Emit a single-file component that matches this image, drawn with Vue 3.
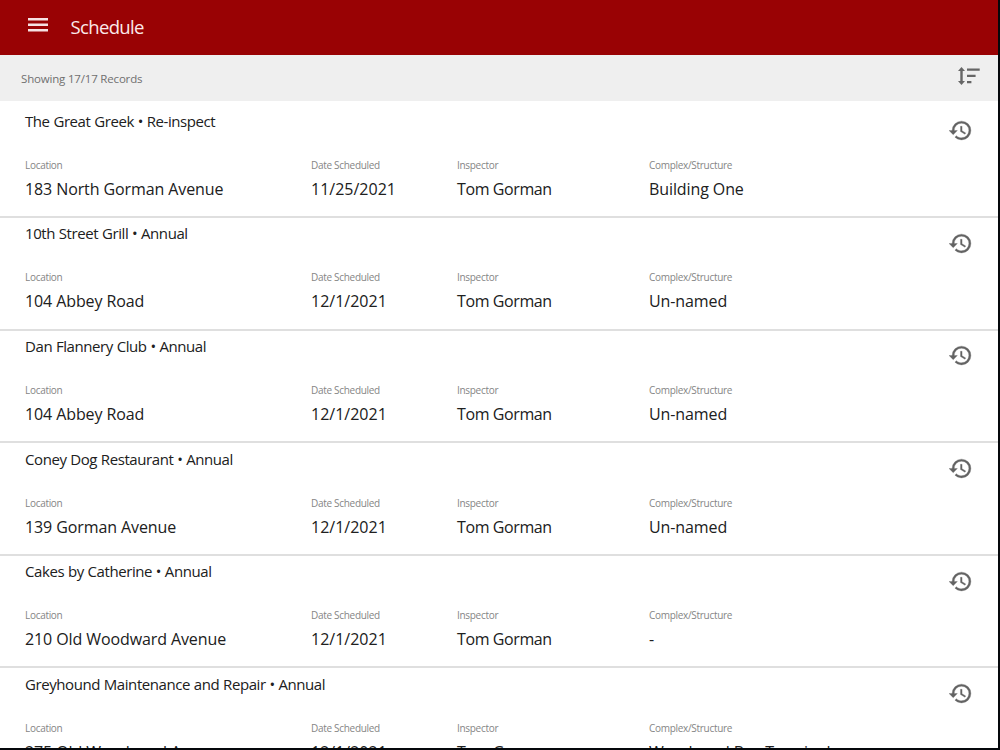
<script setup>
import { ref, computed } from 'vue';

const total = 17;
const records = ref([
  { id: 1, name: 'The Great Greek', type: 'Re-inspect', location: '183 North Gorman Avenue', date: '11/25/2021', inspector: 'Tom Gorman', structure: 'Building One' },
  { id: 2, name: '10th Street Grill', type: 'Annual', location: '104 Abbey Road', date: '12/1/2021', inspector: 'Tom Gorman', structure: 'Un-named' },
  { id: 3, name: 'Dan Flannery Club', type: 'Annual', location: '104 Abbey Road', date: '12/1/2021', inspector: 'Tom Gorman', structure: 'Un-named' },
  { id: 4, name: 'Coney Dog Restaurant', type: 'Annual', location: '139 Gorman Avenue', date: '12/1/2021', inspector: 'Tom Gorman', structure: 'Un-named' },
  { id: 5, name: 'Cakes by Catherine', type: 'Annual', location: '210 Old Woodward Avenue', date: '12/1/2021', inspector: 'Tom Gorman', structure: '-' },
  { id: 6, name: 'Greyhound Maintenance and Repair', type: 'Annual', location: '275 Old Woodward Avenue', date: '12/1/2021', inspector: 'Tom Gorman', structure: 'Woodward Bus Terminal' },
]);

const summary = computed(() => `Showing ${total}/${total} Records`);
</script>

<template>
  <div class="screen">
    <header class="app-bar">
      <svg class="menu" viewBox="0 0 20 14">
        <path d="M0 0h20v2.6H0zM0 5.5h20v2.6H0zM0 11h20v2.6H0z" />
      </svg>
      <h1>Schedule</h1>
    </header>

    <div class="toolbar">
      <span class="summary">{{ summary }}</span>
      <svg class="sort" viewBox="0 0 22 18">
        <path d="M3.5 0 7 3.9H4.7v10.2H7L3.5 18 0 14.1h2.3V3.9H0z" />
        <path d="M9 1.5h12.7v2.3H9zM9 7.7h8.6V10H9zM9 13.9h4.4v2.3H9z" />
      </svg>
    </div>

    <main class="list">
      <article v-for="record in records" :key="record.id" class="record">
        <div class="top">
          <h2>{{ record.name }} • {{ record.type }}</h2>
          <svg class="history" viewBox="0 0 24 24">
            <path d="M13 3a9 9 0 0 0-9 9H1l4 4 4-4H6a7 7 0 1 1 7 7c-1.93 0-3.68-.79-4.94-2.06l-1.42 1.42A8.95 8.95 0 0 0 13 21a9 9 0 0 0 0-18zm-1 5v5l4.28 2.54.72-1.21-3.5-2.08V8z" />
          </svg>
        </div>
        <dl class="fields">
          <div>
            <dt>Location</dt>
            <dd>{{ record.location }}</dd>
          </div>
          <div>
            <dt>Date Scheduled</dt>
            <dd class="date">{{ record.date }}</dd>
          </div>
          <div>
            <dt>Inspector</dt>
            <dd class="inspector">{{ record.inspector }}</dd>
          </div>
          <div>
            <dt>Complex/Structure</dt>
            <dd>{{ record.structure }}</dd>
          </div>
        </dl>
      </article>
    </main>
  </div>
</template>

<style>
body {
  background: #05080c;
  overflow: hidden;
}
</style>

<style scoped>
.screen {
  display: flex;
  flex-direction: column;
  box-sizing: border-box;
  width: 998px;
  height: 747.5px;
  overflow: hidden;
  background: #fff;
  color: #202020;
  font-family: "Segoe UI", "Open Sans", "Noto Sans", sans-serif;
}
.app-bar {
  display: flex;
  align-items: center;
  flex: 0 0 55px;
  background: #990204;
  color: #fbe9ea;
}
.menu {
  width: 20px;
  height: 14px;
  margin: 0 23px 5px 27.5px;
  fill: #f6e1e3;
}
h1 {
  margin: 0 0 2px;
  font-size: 18.5px;
  font-weight: 400;
  letter-spacing: -0.65px;
}
.toolbar {
  display: flex;
  align-items: center;
  justify-content: space-between;
  flex: 0 0 46px;
  padding: 0 18px 0 21px;
  background: #efefef;
}
.summary {
  color: #707070;
  font-size: 11.5px;
  letter-spacing: -0.18px;
}
.sort {
  width: 22px;
  height: 18px;
  margin-bottom: 4px;
  fill: #666;
}
.list {
  flex: 1;
  min-height: 0;
  padding-top: 4.5px;
  overflow: hidden;
}
.record {
  box-sizing: border-box;
  height: 112.6px;
  padding: 3.3px 25px 0;
  border-bottom: 2px solid #dfdfdf;
}
.top {
  display: flex;
  justify-content: space-between;
  height: 47px;
}
h2 {
  margin: 0;
  font-size: 15px;
  line-height: 24px;
  font-weight: 400;
  letter-spacing: -0.42px;
  word-spacing: 0.3px;
}
.history {
  width: 25px;
  height: 25px;
  margin: 9.5px 0 0;
  fill: #636363;
  stroke: #636363;
  stroke-width: 0.3;
}
.fields {
  display: grid;
  grid-template-columns: 286px 146px 192px 1fr;
  margin: 0;
}
dt {
  color: #858585;
  font-size: 10px;
  line-height: 18px;
  letter-spacing: -0.3px;
}
dd {
  margin: 3px 0 0;
  font-size: 16px;
  line-height: 24px;
  letter-spacing: -0.1px;
  white-space: nowrap;
}
.date {
  letter-spacing: 0;
}
.inspector {
  letter-spacing: -0.4px;
}
</style>
